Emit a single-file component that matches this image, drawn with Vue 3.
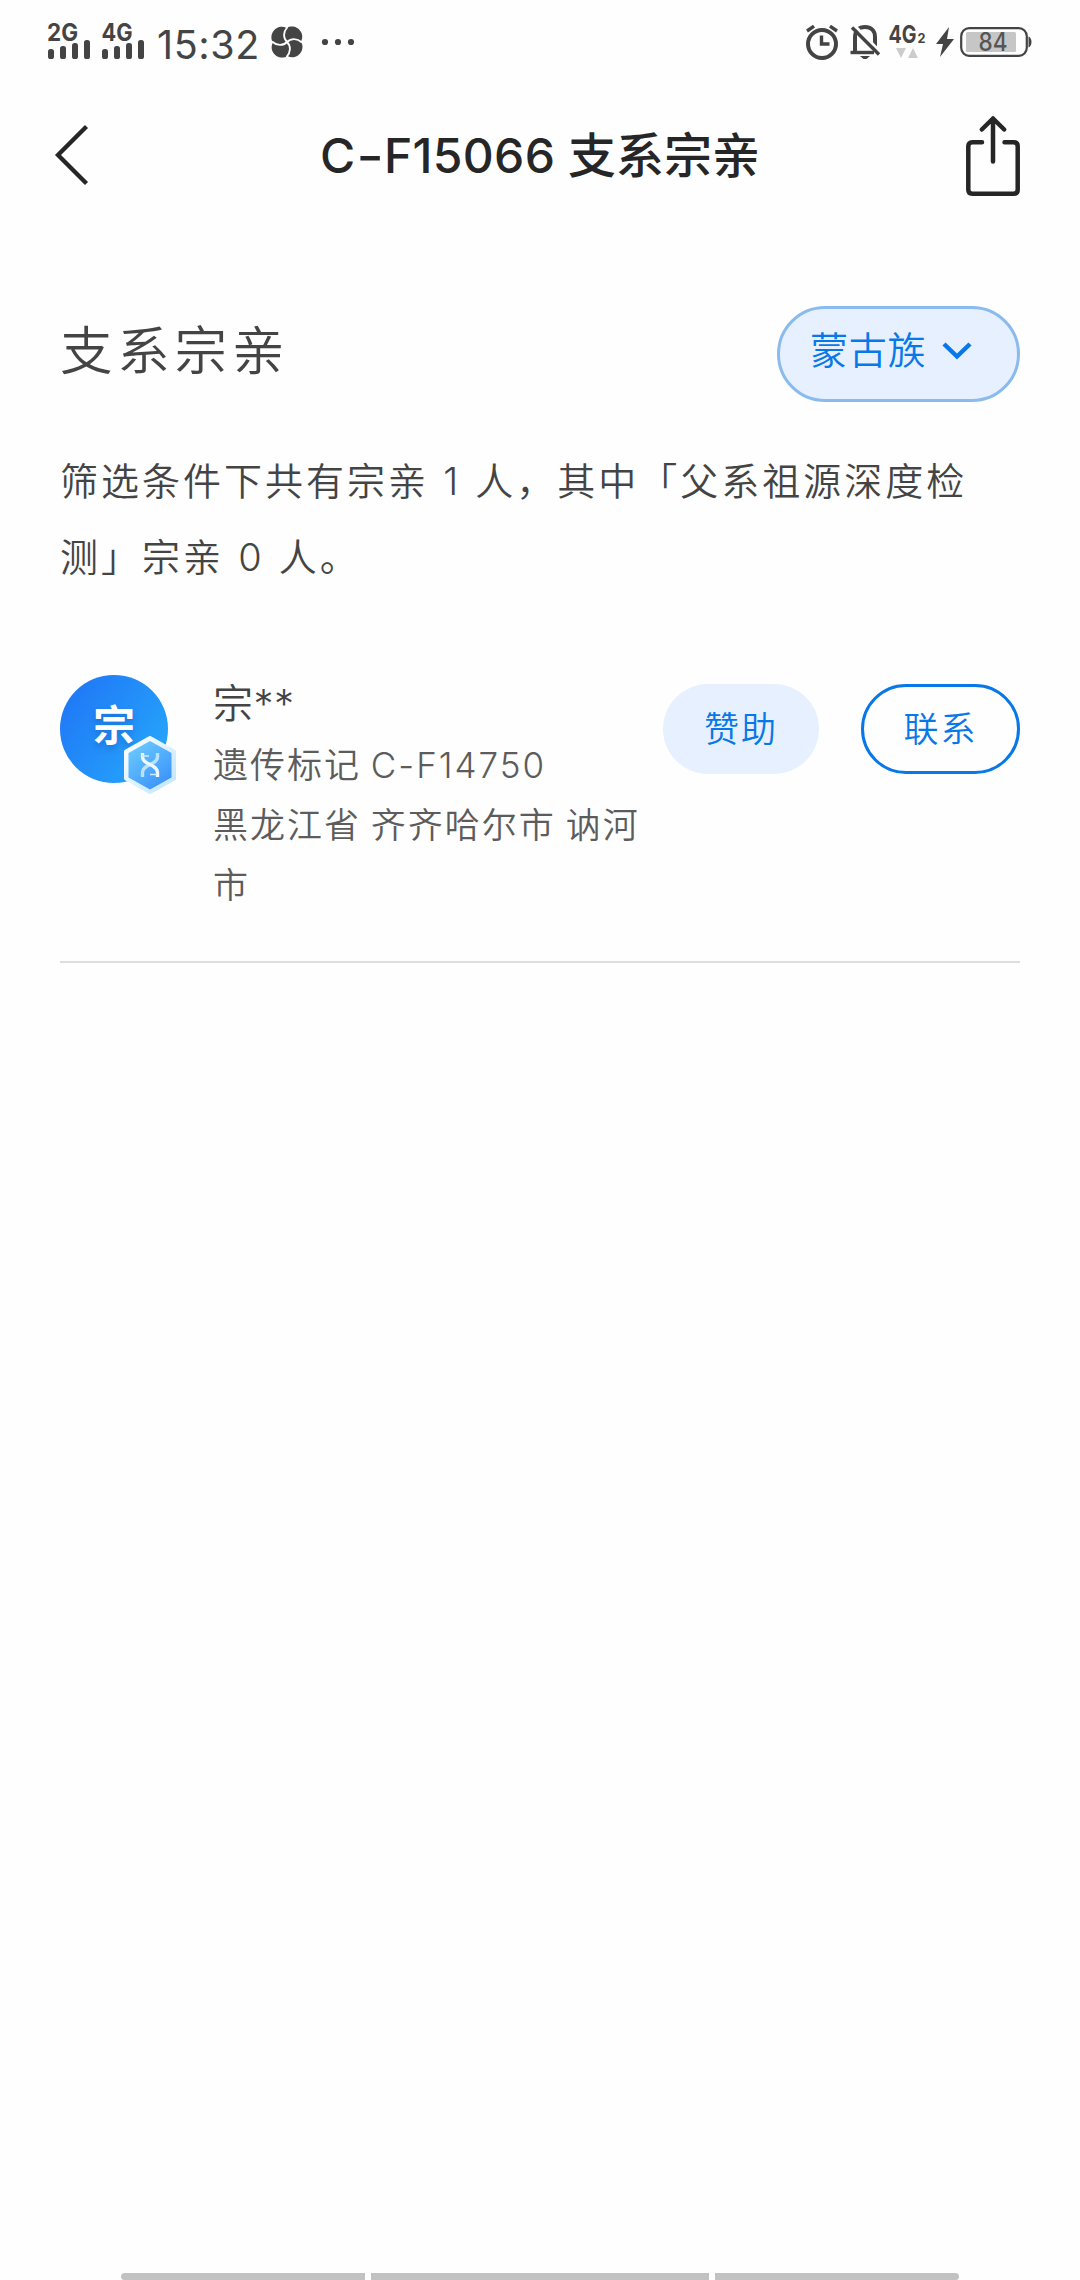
<script setup>
const members = [
  {
    initial: '宗',
    name: '宗**',
    marker: '遗传标记 C-F14750',
    region: '黑龙江省 齐齐哈尔市 讷河市'
  }
]
const total = 1
const deepTested = 0
const quarterTurns = [0, 90, 180, 270]
</script>

<template>
  <div class="screen">
    <header class="status">
      <div class="cluster">
        <svg class="signals" width="98" height="40" viewBox="0 0 98 40">
          <g class="net">
            <text x="-1" y="17" textLength="31" lengthAdjust="spacingAndGlyphs">2G</text>
            <text x="53.500" y="17" textLength="31" lengthAdjust="spacingAndGlyphs">4G</text>
          </g>
          <g fill="#444">
            <rect x="0" y="25" width="6" height="10" rx="2.600" />
            <rect x="12" y="22" width="6" height="13" rx="2.600" />
            <rect x="24" y="19" width="6" height="16" rx="2.600" />
            <rect x="36" y="16" width="6" height="19" rx="2.600" />
            <rect x="54" y="25" width="6" height="10" rx="2.600" />
            <rect x="66" y="22" width="6" height="13" rx="2.600" />
            <rect x="78" y="19" width="6" height="16" rx="2.600" />
            <rect x="90" y="16" width="6" height="19" rx="2.600" />
          </g>
        </svg>
        <span class="time">15:32</span>
        <svg class="fan" width="32" height="32" viewBox="0 0 32 32">
          <path
            v-for="a in quarterTurns" :key="a" :transform="`rotate(${a} 16 16)`" fill="#444"
            d="M16 16C12 12 12 6 15.500 2C7-3-3.500 7 2 16.500C6 20 12 20 16 16Z"
          />
          <path
            v-for="a in quarterTurns" :key="'g' + a" :transform="`rotate(${a} 16 16)`" fill="none" stroke="#fefefe" stroke-width="1.800"
            d="M16 16C12 12 12 6 16.500 1"
          />
        </svg>
        <svg class="dots" width="34" height="8" viewBox="0 0 34 8" fill="#444">
          <circle cx="4" cy="4" r="3.100" /><circle cx="17" cy="4" r="3.100" /><circle cx="30" cy="4" r="3.100" />
        </svg>
      </div>
      <div class="cluster">
        <svg width="34" height="36" viewBox="0 0 34 36" fill="none" stroke="#444">
          <circle cx="17" cy="20" r="14" stroke-width="4" />
          <path d="M16.500 11.500V20H24.500" stroke-width="3.400" />
          <path d="M2 7 9 2.200M25 2.200 32 7" stroke-width="3.400" />
        </svg>
        <svg class="bell" width="30" height="36" viewBox="0 0 30 36" fill="none" stroke="#444">
          <path d="M5 28V13C5 7 9 3 15 3S25 7 25 13V27" stroke-width="4" />
          <path d="M0.500 28.500H24" stroke-width="3.400" />
          <path d="M4 1 31 28.500" stroke="#fefefe" stroke-width="3" />
          <path d="M2 3.500 29 30.500" stroke-width="3.400" />
          <path d="M10 32H20L16.500 35H13.500Z" fill="#444" stroke="none" />
        </svg>
        <svg class="data" width="37" height="36" viewBox="0 0 37 36">
          <g class="net">
            <text x="-0.500" y="19" textLength="28" lengthAdjust="spacingAndGlyphs">4G</text>
            <text x="28.500" y="19" textLength="8" lengthAdjust="spacingAndGlyphs" class="tiny">2</text>
          </g>
          <path d="M7 24H17L12 34ZM19 34H29L24 24Z" fill="#ccc" />
        </svg>
        <svg class="bolt" width="18" height="30" viewBox="0 0 18 30">
          <path d="M13 0 0 17H7L4 30 18 12H11Z" fill="#444" />
        </svg>
        <svg class="battery" width="72" height="30" viewBox="0 0 72 30">
          <rect x="1.200" y="1.200" width="65.600" height="27.600" rx="8" fill="none" stroke="#444" stroke-width="2.200" />
          <rect x="6" y="5" width="50" height="20" rx="1.500" fill="#c6c6c6" />
          <path d="M68.500 9.500C72.500 11 72.500 19 68.500 20.500Z" fill="#444" />
          <text x="18.500" y="24" class="level" textLength="29" lengthAdjust="spacingAndGlyphs">84</text>
        </svg>
      </div>
    </header>

    <nav class="bar">
      <svg class="back" width="40" height="64" viewBox="0 0 40 64" fill="none" stroke="#262626" stroke-width="4.300">
        <path d="M34.500 3.500 6 32 34.500 60.500" />
      </svg>
      <h1><span class="code">C<span class="dash">-</span>F15066</span> 支系宗亲</h1>
      <svg width="54" height="80" viewBox="0 0 54 80" fill="none" stroke="#262626" stroke-width="4.500" stroke-linecap="round" stroke-linejoin="round">
        <path d="M16 26.200H6.200Q2.300 26.200 2.300 30.200V73.800Q2.300 77.800 6.300 77.800H47.700Q51.700 77.800 51.700 73.800V30.200Q51.700 26.200 47.700 26.200H38.500" />
        <path d="M27 2.500V45.500M15.800 13.500 27 2.500 38.200 13.500" />
      </svg>
    </nav>

    <main>
      <section class="head">
        <h2>支系宗亲</h2>
        <button class="filter">
          <span>蒙古族</span>
          <svg width="30" height="18" viewBox="0 0 30 18" fill="none" stroke="#0878e8" stroke-width="4.500">
            <path d="M2 2 15 14.500 28 2" />
          </svg>
        </button>
      </section>

      <p class="summary">筛选条件下共有宗亲 {{ total }} 人，其中「父系祖源深度检测」宗亲 {{ deepTested }} 人。</p>

      <article v-for="m in members" :key="m.name" class="member">
        <div class="avatar">
          <span>{{ m.initial }}</span>
          <svg class="badge" width="52" height="58" viewBox="0 0 52 58">
            <defs>
              <linearGradient id="hexEdge" x1="0" y1="0" x2="1" y2="1">
                <stop offset="0" stop-color="#fff" />
                <stop offset="1" stop-color="#bfe4fd" />
              </linearGradient>
              <linearGradient id="hexFill" x1="0" y1="0" x2=".7" y2="1">
                <stop offset="0" stop-color="#6fd0ff" />
                <stop offset="1" stop-color="#3c93fa" />
              </linearGradient>
            </defs>
            <path d="M26 2 50 15.500V42.500L26 56 2 42.500V15.500Z" fill="url(#hexEdge)" stroke="url(#hexEdge)" stroke-width="4" stroke-linejoin="round" />
            <path d="M26 5 47.500 17V41.500L26 53.500 4.500 41.500V17Z" fill="url(#hexFill)" />
            <g fill="none" stroke-width="3.400">
              <path d="M33.500 17V21C33.500 29 18.500 28 18.500 36.500V41" stroke="#b9e2ff" />
              <path d="M18.500 17V21C18.500 29 33.500 28 33.500 36.500V41" stroke="#eef9ff" />
              <path d="M18 20H25M26 38.500H33" stroke="#cdeaff" stroke-width="1.600" />
            </g>
          </svg>
        </div>
        <div class="info">
          <div class="name">{{ m.name }}</div>
          <div class="line">{{ m.marker }}</div>
          <div class="line">{{ m.region }}</div>
        </div>
        <div class="actions">
          <button class="sponsor">赞助</button>
          <button class="contact">联系</button>
        </div>
      </article>
    </main>

    <footer><i class="first"></i><i class="mid"></i><i class="last"></i></footer>
  </div>
</template>

<style>
body { margin: 0; background: #fefefe; }
</style>

<style scoped>
.screen {
  box-sizing: border-box;
  width: 1080px;
  height: 2280px;
  display: flex;
  flex-direction: column;
  overflow: hidden;
  background: #fefefe;
  color: #444;
  font-family: Inter, "Noto Sans CJK SC", sans-serif;
  font-weight: 350;
}
h1, h2, p { margin: 0; font-weight: inherit; }
svg { display: block; flex: none; overflow: visible; }
button {
  box-sizing: border-box;
  margin: 0;
  padding: 0;
  border: 0;
  font-family: inherit;
  font-weight: inherit;
  color: #0878e8;
}
.status {
  height: 84px;
  padding: 0 48px;
  display: flex;
  justify-content: space-between;
  align-items: flex-start;
}
.cluster { display: flex; height: 84px; align-items: center; }
.net { font-family: Inter, sans-serif; font-weight: 700; font-size: 24px; fill: #444; }
.net .tiny { font-size: 13px; }
.signals { margin-top: 4px; }
.time { margin-left: 11px; width: 102px; font-size: 39.5px; font-weight: 400; line-height: 48px; margin-top: 5px; white-space: nowrap; letter-spacing: 0.6px; }
.fan { margin-left: 12px; }
.dots { margin-left: 18px; margin-top: -1px; }
.bell { margin-left: 11px; }
.data { margin-left: 9px; }
.bolt { margin-left: 10px; }
.battery { margin-left: 6px; }
.level { font-family: Inter, sans-serif; font-size: 25px; font-weight: 500; fill: #555; }

.bar {
  height: 144px;
  padding: 0 60px 0 52px;
  display: flex;
  align-items: center;
}
.back { margin-top: -3px; }
.bar h1 { flex: 1; padding-left: 22px; text-align: center; font-size: 48px; line-height: 64px; font-weight: 500; color: #262626; white-space: nowrap; }
.code { font-weight: 450; letter-spacing: 0.3px; }
.dash { display: inline-block; margin: 0 3px; transform: scaleX(1.25); }

main { flex: 1; padding: 0 60px; }
.head { margin-top: 78px; height: 96px; display: flex; justify-content: space-between; }
.head h2 { font-size: 52.5px; letter-spacing: 4.8px; line-height: 91px; }
.filter {
  width: 243px;
  height: 96px;
  padding: 0 0 5px 30px;
  display: flex;
  align-items: center;
  border: 3px solid #8abbee;
  border-radius: 48px;
  background: #e6f0fe;
  font-size: 38px;
  letter-spacing: 0.7px;
}
.filter span { padding-bottom: 9px; }
.filter svg { margin-left: 16px; margin-top: -2px; }

.summary {
  margin-top: 42px;
  font-size: 38px;
  line-height: 75.5px;
  letter-spacing: 3px;
  word-spacing: 0.5px;
}

.member {
  margin-top: 80px;
  height: 286px;
  display: flex;
  align-items: flex-start;
  border-bottom: 2px solid #dedede;
}
.avatar {
  position: relative;
  flex: none;
  width: 108px;
  height: 108px;
  border-radius: 50%;
  background: linear-gradient(125deg, #2079f6 12%, #25a5fb 88%);
  text-align: center;
}
.avatar span { font-size: 42px; line-height: 102px; font-weight: 700; color: #fff; text-shadow: 0 4px 6px rgba(10, 70, 160, .35); }
.badge { position: absolute; left: 64px; top: 61px; }
.info { width: 440px; margin-left: 45px; padding-top: 1px; }
.name { height: 59px; line-height: 56px; font-size: 40px; letter-spacing: 0.5px; }
.line { font-size: 35px; line-height: 60px; letter-spacing: 2px; word-spacing: -2px; color: #5c5c5c; }
.actions { margin-left: auto; margin-top: 9px; display: flex; gap: 42px; }
.actions button { height: 90px; border-radius: 45px; font-size: 35px; letter-spacing: 2px; padding-bottom: 5px; }
.actions .sponsor { width: 156px; background: #e6f0fe; }
.actions .contact { width: 159px; background: transparent; border: 3px solid #0878e8; }

footer { height: 7px; padding-left: 121px; display: flex; gap: 6px; }
footer i { background: #c2c2c2; height: 7px; width: 244px; }
footer .mid { width: 338px; }
footer .first { border-radius: 5px 0 0 5px; }
footer .last { border-radius: 0 5px 5px 0; }
</style>
